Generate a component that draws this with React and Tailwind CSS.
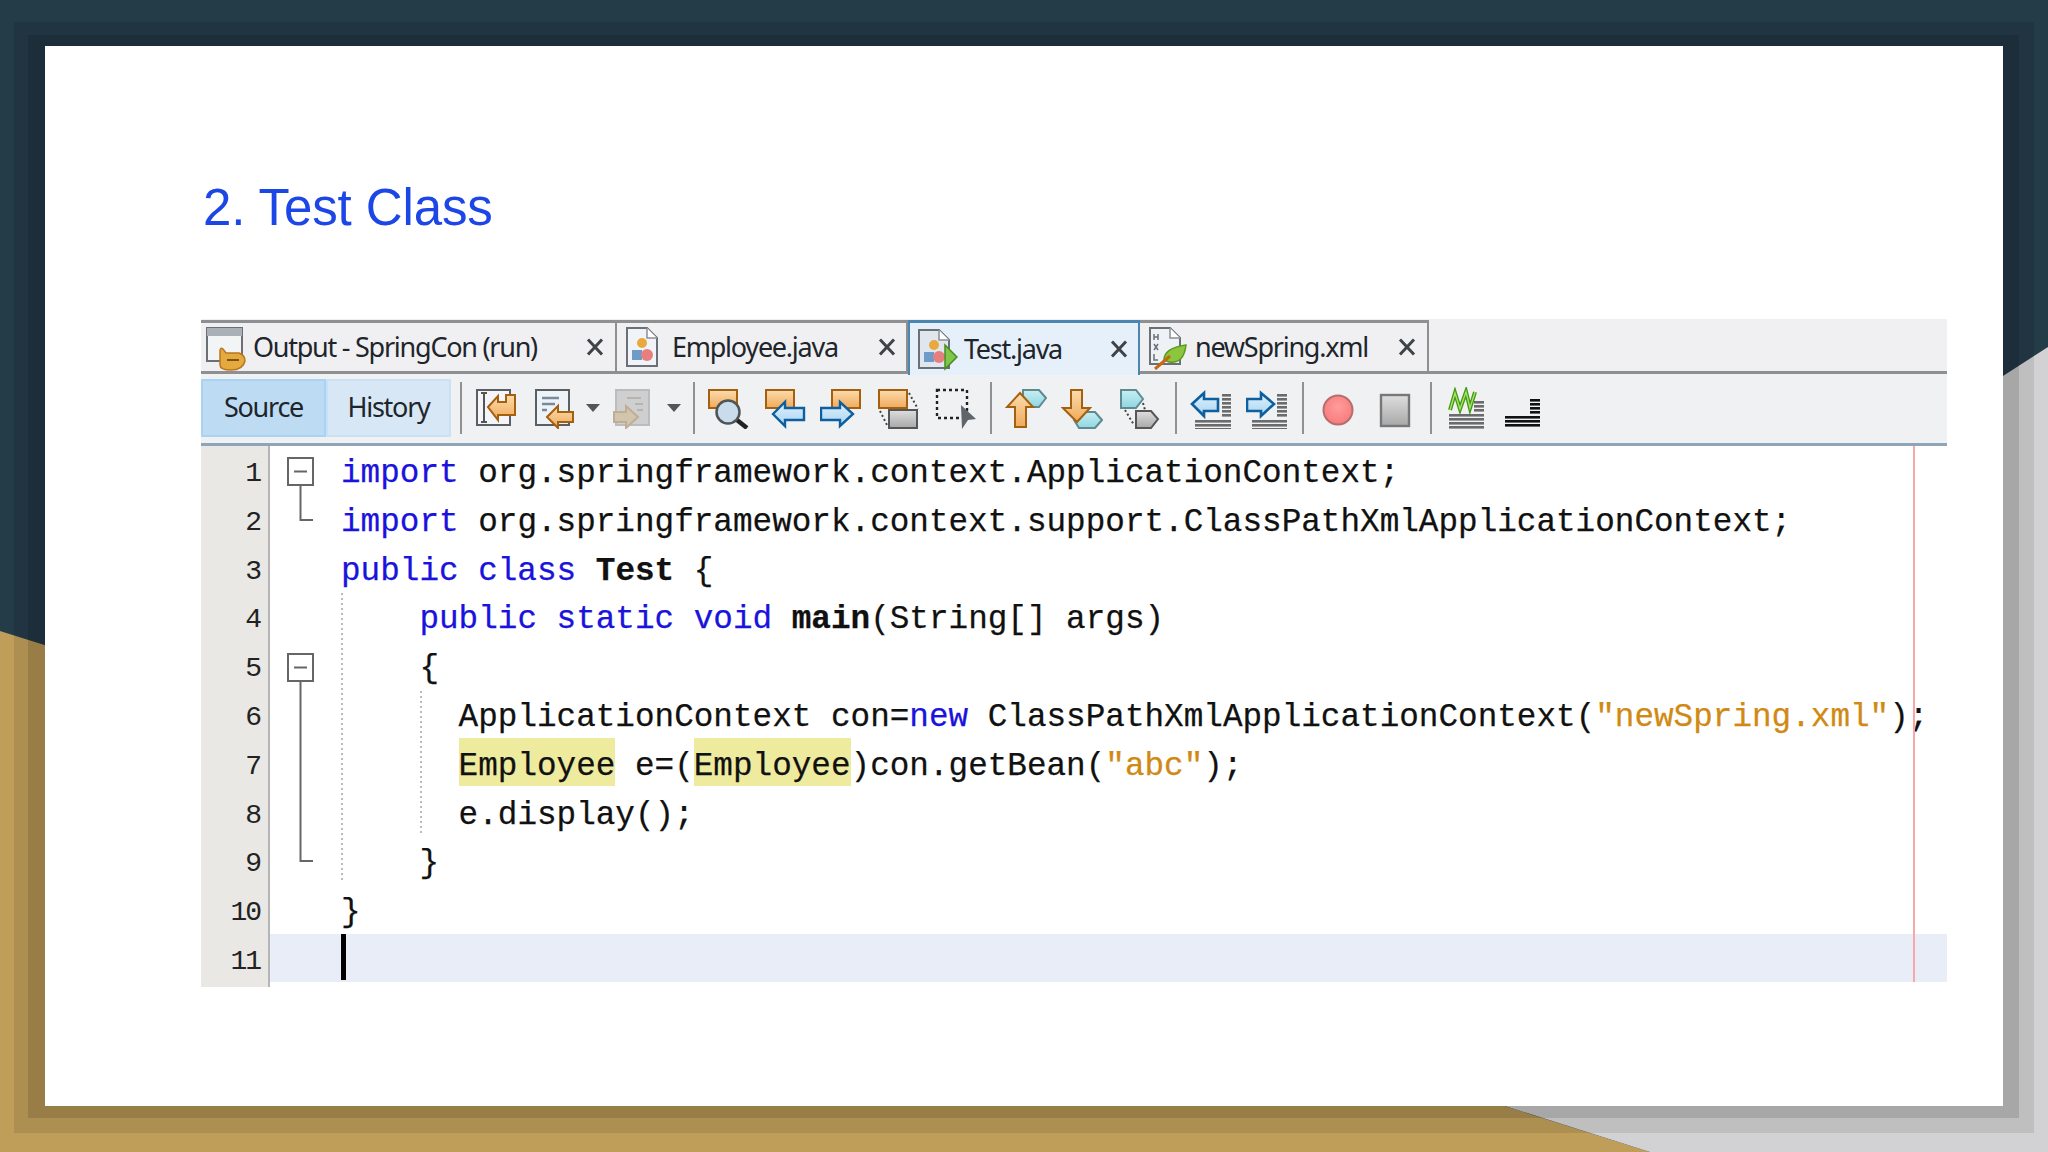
import React from "react";

const OR = "#a4600f", BL = "#0d5f9f", HEX = "#5f8a90", GR = "#5a5f64";

function Ic({ className = "", children }) {
  return (
    <svg width="42" height="42" viewBox="0 0 42 42" className={"shrink-0 " + className} shapeRendering="geometricPrecision">
      {children}
    </svg>
  );
}
const OrRect = ({ x = 1 }) => <rect x={x} y="3" width="28" height="18" fill="url(#gOr)" stroke={OR} strokeWidth="2" />;
const GrRect = ({ x, y }) => <rect x={x} y={y} width="28" height="18" fill="url(#gGr)" stroke="#565656" strokeWidth="2" />;
const Dots = ({ d }) => <path d={d} fill="none" stroke="#444" strokeWidth="2" strokeDasharray="2 2.5" />;
const Stripes = ({ x, y, w, n, color = "#6b6b6b" }) => (
  <g fill={color}>
    {Array.from({ length: n }).map((_, i) => (
      <rect key={i} x={x} y={y + i * 4} width={w} height="2.6" />
    ))}
  </g>
);
const Sep = ({ className = "" }) => <div className={"w-[2px] h-[52px] bg-[#8f9193] shrink-0 " + className} />;
const Caret = ({ className = "" }) => (
  <svg width="14" height="10" viewBox="0 0 14 10" className={"shrink-0 " + className}>
    <path d="M0 1 H14 L7 9 Z" fill="#555" />
  </svg>
);
const Close = ({ className = "" }) => (
  <svg width="18" height="18" viewBox="0 0 18 18" className={"shrink-0 " + className}>
    <path d="M2 1.5 L16 16.5 M16 1.5 L2 16.5" stroke="#3f4347" strokeWidth="3" fill="none" />
  </svg>
);

function Tab({ width, pad, icon, label, active, closeMr }) {
  return (
    <div
      className={
        "relative flex items-center h-[54px] shrink-0 " +
        width +
        (active
          ? " border-t-[3px] border-x-2 border-[#4a86b0] bg-[#e6f0fa] z-10 h-[55px]"
          : " border-t-[3px] border-r-2 border-b-[3px] border-[#8d8f91]")
      }
    >
      {icon}
      <span className={"text-[27px] tracking-[-1.25px] text-[#20252b] font-['Noto_Sans',sans-serif] whitespace-pre " + pad}>{label}</span>
      <Close className={"ml-auto " + closeMr} />
    </div>
  );
}

const K = ({ children }) => <span className="text-[#1a12dd]">{children}</span>;
const S = ({ children }) => <span className="text-[#d08a14]">{children}</span>;
const B = ({ children }) => <span className="font-bold">{children}</span>;
const H = ({ children }) => (
  <span className="bg-[#eeeb9f] shadow-[0_-10px_0_#eeeb9f,0_1px_0_#eeeb9f]">{children}</span>
);

const rows = [
  <><K>import</K> org.springframework.context.ApplicationContext;</>,
  <><K>import</K> org.springframework.context.support.ClassPathXmlApplicationContext;</>,
  <><K>public class</K> <B>Test</B> {"{"}</>,
  <>{"    "}<K>public static void</K> <B>main</B>(String[] args)</>,
  <>{"    {"}</>,
  <>{"      "}ApplicationContext con=<K>new</K> ClassPathXmlApplicationContext(<S>"newSpring.xml"</S>);</>,
  <>{"      "}<H>Employee</H> e=(<H>Employee</H>)con.getBean(<S>"abc"</S>);</>,
  <>{"      "}e.display();</>,
  <>{"    }"}</>,
  <>{"}"}</>,
];

export default function App() {
  return (
    <div className="relative w-[2048px] h-[1152px] overflow-hidden bg-[#243b48] pt-[46px] pl-[45px]">
      <svg className="absolute left-0 top-0" width="2048" height="1152" viewBox="0 0 2048 1152">
        <defs>
          <linearGradient id="gOr" x1="0" y1="0" x2="0" y2="1">
            <stop offset="0" stopColor="#fbdcae" />
            <stop offset="1" stopColor="#f0aa5a" />
          </linearGradient>
          <linearGradient id="gBl" x1="0" y1="0" x2="0" y2="1">
            <stop offset="0" stopColor="#e2f2fc" />
            <stop offset="1" stopColor="#a8d4f2" />
          </linearGradient>
          <linearGradient id="gGr" x1="0" y1="0" x2="0" y2="1">
            <stop offset="0" stopColor="#dedede" />
            <stop offset="1" stopColor="#a8a8a8" />
          </linearGradient>
          <linearGradient id="gHx" x1="0" y1="0" x2="0" y2="1">
            <stop offset="0" stopColor="#c8eff3" />
            <stop offset="1" stopColor="#8fd6e2" />
          </linearGradient>
          <radialGradient id="gRec" cx="0.5" cy="0.4" r="0.6">
            <stop offset="0" stopColor="#ff9c9c" />
            <stop offset="1" stopColor="#f77b7b" />
          </radialGradient>
        </defs>
        <polygon points="0,631 1650,1152 0,1152" fill="#bf9e5a" />
        <polygon points="2048,347 1505,697 1505,1106 1650,1152 2048,1152" fill="#d2d2d4" />
      </svg>

      <div className="relative w-[1958px] h-[1060px]">
        <div className="absolute -left-[31px] -right-[31px] -top-[24px] -bottom-[27px] bg-black/[0.09]" />
        <div className="absolute -left-[17px] -right-[16px] -top-[11px] -bottom-[12px] bg-black/[0.12]" />
        <div className="relative w-full h-full bg-white pt-[132px] pl-[156px]">
          <h1 className="ml-[2px] text-[51px] leading-[60px] tracking-[-0.1px] text-[#1c46e6] font-['Liberation_Sans',sans-serif]">2. Test Class</h1>

          <div className="mt-[81px] w-[1746px]">
            {/* tab strip */}
            <div className="flex bg-[#f0f0f2] h-[55px] pt-[1px]">
              <Tab
                width="w-[416px]"
                pad="ml-[6px]"
                closeMr="mr-[11px]"
                label="Output - SpringCon (run)"
                icon={
                  <svg width="46" height="46" viewBox="0 0 46 46" className="shrink-0 -mb-[2px]">
                    <rect x="6" y="3" width="35" height="33" fill="#f2f4f6" stroke="#6a7076" strokeWidth="2" />
                    <rect x="6" y="3" width="35" height="8" fill="#a9b0b7" />
                    <path d="M19 40 V26 Q19 22 22 24 L25 28 H38 Q44 30 44 36 Q42 45 30 45 Q19 45 19 40 Z" fill="#e4a93f" stroke="#b9761e" strokeWidth="1.5" />
                    <path d="M26 35 H38" stroke="#7c5315" strokeWidth="2" />
                  </svg>
                }
              />
              <Tab
                width="w-[291px]"
                pad="ml-[11px]"
                closeMr="mr-[10px]"
                label="Employee.java"
                icon={
                  <svg width="42" height="46" viewBox="0 0 42 46" className="shrink-0 ml-[2px]">
                    <path d="M8 4 H28 L38 14 V42 H8 Z" fill="#f0f3f7" stroke="#6a7076" strokeWidth="2" />
                    <path d="M28 4 V14 H38" fill="#fff" stroke="#8a9096" strokeWidth="1.5" />
                    <circle cx="23" cy="19" r="5" fill="#e8a93e" />
                    <rect x="13" y="26" width="10" height="10" fill="#6f9bc8" />
                    <circle cx="28" cy="31" r="6" fill="#e77f7f" />
                  </svg>
                }
              />
              <Tab
                active
                width="w-[232px]"
                pad="ml-[6px]"
                closeMr="mr-[10px]"
                label="Test.java"
                icon={
                  <svg width="48" height="46" viewBox="0 0 48 46" className="shrink-0 -mb-[2px]">
                    <path d="M9 3 H29 L39 13 V41 H9 Z" fill="#dfe6ee" stroke="#6a7076" strokeWidth="2" />
                    <path d="M29 3 V13 H39" fill="#fff" stroke="#8a9096" strokeWidth="1.5" />
                    <circle cx="24" cy="18" r="5" fill="#e8a93e" />
                    <rect x="14" y="25" width="10" height="10" fill="#6f9bc8" />
                    <circle cx="29" cy="30" r="6" fill="#e77f7f" />
                    <path d="M35 18 L47 30 L35 42 Z" fill="#7fc64a" stroke="#4a8a22" strokeWidth="1.5" />
                  </svg>
                }
              />
              <Tab
                width="w-[289px]"
                pad="ml-[7px]"
                closeMr="mr-[11px]"
                label="newSpring.xml"
                icon={
                  <svg width="48" height="46" viewBox="0 0 48 46" className="shrink-0">
                    <path d="M10 4 H30 L40 14 V40 H10 Z" fill="#eef1f5" stroke="#6a7076" strokeWidth="2" />
                    <path d="M30 4 V14 H40" fill="#fff" stroke="#8a9096" strokeWidth="1.5" />
                    <path d="M14 10 V16 M18 10 V16 M14 13 H18 M14 20 L18 26 M18 20 L14 26 M14 30 V36 H18" stroke="#6a7076" strokeWidth="1.5" fill="none" />
                    <path d="M24 36 Q24 24 46 21 Q44 40 29 38 Z" fill="#8cc63f" stroke="#5c9a1f" strokeWidth="1.5" />
                    <path d="M15 45 L30 32" stroke="#c46a10" strokeWidth="3" />
                  </svg>
                }
              />
              <div className="flex-1 border-b-[3px] border-[#8d8f91] h-[54px]" />
            </div>

            {/* toolbar */}
            <div className="flex items-center h-[72px] bg-[#f0f1f3] border-b-[3px] border-[#8ea4b8] pb-[2px]">
              <div className="flex items-center justify-center w-[125px] h-[58px] bg-[#bddcf3] border-2 border-[#a9d3f2] text-[27px] tracking-[-1.25px] text-[#20252b] font-['Noto_Sans',sans-serif]">Source</div>
              <div className="flex items-center justify-center w-[125px] h-[58px] bg-[#d8e7f5] border-2 border-[#c9e0f5] text-[27px] tracking-[-1.25px] text-[#20252b] font-['Noto_Sans',sans-serif]">History</div>

              <Sep className="ml-[9px]" />
              <Ic className="ml-[14px]">
                <rect x="1" y="3" width="33" height="35" fill="#f3f5f8" stroke={GR} strokeWidth="2" />
                <path d="M5 6 H11 M8 6 V35 M5 35 H11" stroke="#555" strokeWidth="2" fill="none" />
                <path d="M12 20 L22 9 V15 H30 V8 H39 V28 H22 V33 Z" fill="url(#gOr)" stroke={OR} strokeWidth="2" />
              </Ic>
              <Ic className="ml-[17px]">
                <rect x="1" y="3" width="33" height="35" fill="#eef3f8" stroke={GR} strokeWidth="2" />
                <path d="M7 11 H24 M7 17 H20 M7 23 H12" stroke="#7a8a9a" strokeWidth="2.4" fill="none" />
                <path d="M12 30 L23 19 V25 H38 V35 H23 V41 Z" fill="url(#gOr)" stroke={OR} strokeWidth="2" />
              </Ic>
              <Caret className="ml-[9px]" />
              <Ic className="ml-[13px]">
                <rect x="3" y="3" width="33" height="35" fill="#cfcfcf" stroke="#bcbcbc" strokeWidth="2" />
                <path d="M14 11 H28 M22 17 H30 M24 23 H30" stroke="#b4b4b4" strokeWidth="2" fill="none" />
                <path d="M1 25 H13 V19 L25 30 L13 41 V35 H1 Z" fill="#d3c4ac" stroke="#bdae98" strokeWidth="2" />
              </Ic>
              <Caret className="ml-[12px]" />
              <Sep className="ml-[12px]" />

              <Ic className="ml-[13px]">
                <OrRect />
                <path d="M29 33 L39 41" stroke="#222" strokeWidth="4.5" />
                <circle cx="20" cy="25" r="11.5" fill="#c9dcec" stroke="#4f5458" strokeWidth="2.5" />
              </Ic>
              <Ic className="ml-[15px]">
                <OrRect />
                <path d="M8 27 L20 15 V21 H39 V33 H20 V39 Z" fill="url(#gBl)" stroke={BL} strokeWidth="2.4" />
              </Ic>
              <Ic className="ml-[13px]">
                <OrRect x={12} />
                <path d="M1 21 H20 V15 L33 27 L20 39 V33 H1 Z" fill="url(#gBl)" stroke={BL} strokeWidth="2.4" />
              </Ic>
              <Ic className="ml-[16px]">
                <OrRect x={1} />
                <GrRect x={11} y={23} />
                <Dots d="M31 6 L40 22 M2 24 L10 40" />
              </Ic>
              <Ic className="ml-[15px]">
                <rect x="2" y="3" width="30" height="28" fill="none" stroke="#222" strokeWidth="2.4" strokeDasharray="3 3" />
                <path d="M26 18 L41 32 L33 33 L27 42 Z" fill="#5f656b" />
              </Ic>
              <Sep className="ml-[13px]" />

              <Ic className="ml-[13px]">
                <path d="M18 3 H34 L41 11 L34 20 H18 Z" fill="url(#gHx)" stroke={HEX} strokeWidth="2" />
                <path d="M15 6 L28 20 H21 V40 H10 V20 H2 Z" fill="url(#gOr)" stroke={OR} strokeWidth="2" />
              </Ic>
              <Ic className="ml-[14px]">
                <path d="M18 25 H34 L41 33 L34 41 H18 L13 33 Z" fill="url(#gHx)" stroke={HEX} strokeWidth="2" />
                <path d="M10 3 H21 V21 H29 L16 35 L2 21 H10 Z" fill="url(#gOr)" stroke={OR} strokeWidth="2" />
              </Ic>
              <Ic className="ml-[16px]">
                <path d="M2 3 H17 L24 12 L17 21 H2 Z" fill="url(#gHx)" stroke={HEX} strokeWidth="2" />
                <path d="M17 24 H32 L39 32 L32 41 H17 Z" fill="url(#gGr)" stroke="#565656" strokeWidth="2" />
                <Dots d="M24 16 L26 23 M6 23 L15 38" />
              </Ic>
              <Sep className="ml-[14px]" />

              <Ic className="ml-[13px]">
                <path d="M2 17 L14 6 V12 H28 V24 H14 V29 Z" fill="url(#gBl)" stroke={BL} strokeWidth="2.6" />
                <Stripes x={32} y={7} w={9} n={6} />
                <Stripes x={5} y={33} w={36} n={3} />
              </Ic>
              <Ic className="ml-[14px]">
                <path d="M1 12 H15 V6 L28 17 L15 29 V24 H1 Z" fill="url(#gBl)" stroke={BL} strokeWidth="2.6" />
                <Stripes x={31} y={7} w={10} n={6} />
                <Stripes x={6} y={33} w={35} n={3} />
              </Ic>
              <Sep className="ml-[14px]" />

              <Ic className="ml-[13px]">
                <circle cx="21" cy="23" r="14.5" fill="url(#gRec)" stroke="#b76d6d" strokeWidth="2" />
              </Ic>
              <Ic className="ml-[15px]">
                <rect x="7" y="8" width="28" height="31" fill="url(#gGr)" stroke="#777" strokeWidth="2.4" />
              </Ic>
              <Sep className="ml-[14px]" />

              <Ic className="ml-[14px]">
                <path d="M4 23 L9 6 L14 22 L20 5 L24 21 L29 5" fill="none" stroke="#3f9a10" strokeWidth="4" />
                <path d="M4 23 L9 6 L14 22 L20 5 L24 21 L29 5" fill="none" stroke="#a8e06a" strokeWidth="1.4" />
                <Stripes x={28} y={14} w={10} n={3} />
                <Stripes x={3} y={27} w={35} n={4} />
              </Ic>
              <Ic className="ml-[15px]">
                <Stripes x={27} y={12} w={10} n={4} color="#111" />
                <Stripes x={2} y={29} w={35} n={3} color="#111" />
              </Ic>
            </div>

            {/* editor */}
            <div className="flex items-start">
              <div className="w-[69px] h-[541px] shrink-0 bg-[#e9e8e4] border-r-2 border-[#b5b5b5]">
                {Array.from({ length: 11 }).map((_, i) => (
                  <div key={i} className="h-[48.8px] pt-[8px] pr-[8px] text-right leading-[40.8px] text-[28px] tracking-[-2px] text-[#222] font-['Liberation_Mono',monospace]">
                    {i + 1}
                  </div>
                ))}
              </div>
              <div className="relative flex-1 h-[536px]">
                {rows.map((r, i) => (
                  <div key={i} className="h-[48.8px] pt-[8px] pl-[71px] leading-[40.8px] text-[32.67px] whitespace-pre text-[#111] font-['Liberation_Mono',monospace] [-webkit-text-stroke:0.25px]">
                    {r}
                  </div>
                ))}
                <div className="h-[48px] bg-[#e9edf7] pl-[71px]">
                  <div className="w-[5px] h-[46px] bg-black" />
                </div>
                <svg className="absolute left-0 top-0 pointer-events-none" width="170" height="536" viewBox="0 0 170 536">
                  <g fill="#fff" stroke="#666" strokeWidth="2">
                    <rect x="18" y="12" width="25" height="27" />
                    <rect x="18" y="208" width="25" height="27" />
                  </g>
                  <path d="M24 25.5 H37 M24 221.5 H37 M30.5 39 V74 H43 M30.5 235 V415 H43" fill="none" stroke="#666" strokeWidth="2" />
                  <path d="M72 147 V435 M151 245 V387" fill="none" stroke="#bbb" strokeWidth="2" strokeDasharray="2 3" />
                </svg>
                <div className="absolute left-[1643px] top-0 bottom-0 w-[2px] bg-[#f5a9a9]" />
              </div>
            </div>
          </div>
        </div>
      </div>
    </div>
  );
}
